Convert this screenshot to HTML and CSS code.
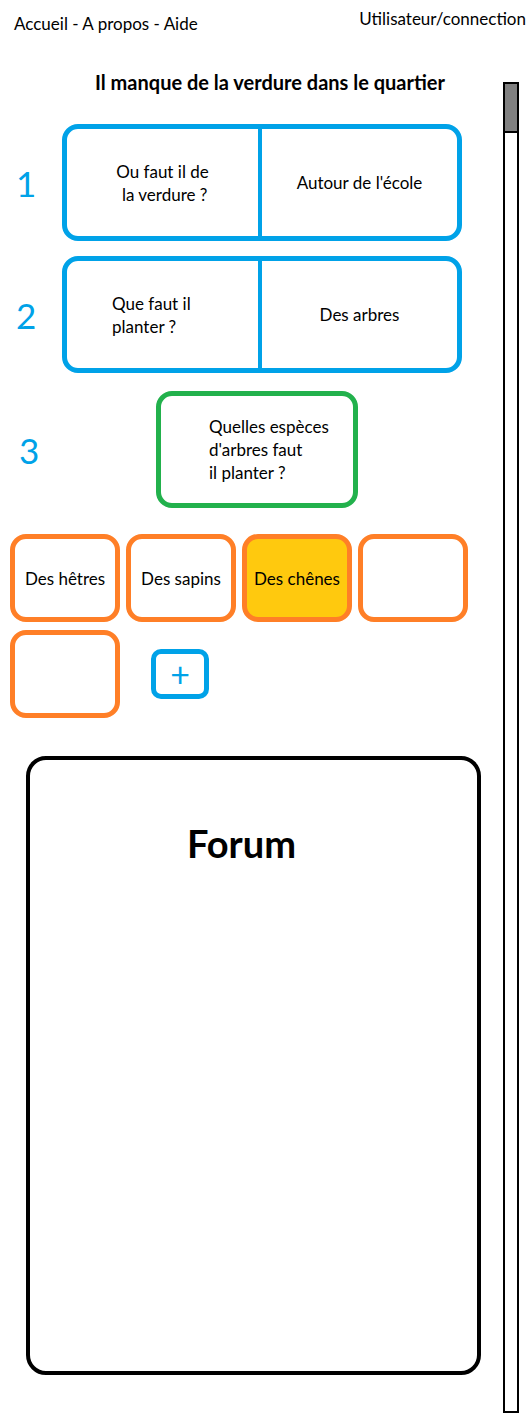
FILE: index.html
```html
<!DOCTYPE html>
<html lang="fr">
<head>
    <meta charset="UTF-8">
    <meta name="viewport" content="width=device-width, initial-scale=1.0">
    <title>Il manque de la verdure dans le quartier</title>
    <link rel="stylesheet" href="styles.css">
</head>
<body>
    <header class="topbar">
        <nav class="nav-links">Accueil - A propos - Aide</nav>
        <a class="user-link">Utilisateur/connection</a>
    </header>

    <div class="page">
        <main class="content">
            <h1 class="title">Il manque de la verdure dans le quartier</h1>

            <div class="step step-1">
                <span class="step-num">1</span>
                <div class="qa">
                    <div class="qa-question center">Ou faut il de<br>&nbsp;la verdure ?</div>
                    <div class="qa-answer">Autour de l'école</div>
                </div>
            </div>

            <div class="step step-2">
                <span class="step-num">2</span>
                <div class="qa">
                    <div class="qa-question">Que faut il<br>planter ?</div>
                    <div class="qa-answer">Des arbres</div>
                </div>
            </div>

            <div class="step step-3">
                <span class="step-num">3</span>
                <div class="question-open">Quelles espèces<br>d'arbres faut<br>il planter ?</div>
            </div>

            <div class="choices">
                <div class="chip">Des hêtres</div>
                <div class="chip">Des sapins</div>
                <div class="chip chip-selected">Des chênes</div>
                <div class="chip"></div>
                <div class="chip"></div>
                <button class="add-btn">+</button>
            </div>

            <section class="forum">
                <h2 class="forum-title">Forum</h2>
            </section>
        </main>

        <div class="scrollbar">
            <div class="scroll-thumb"></div>
        </div>
    </div>
</body>
</html>
```

FILE: styles.css
```css
:root {
    --blue: #00a2e8;
    --green: #22b14c;
    --orange: #ff7f27;
    --yellow: #ffc90e;
    --ink: #000000;
}

* {
    margin: 0;
    padding: 0;
    box-sizing: border-box;
}

body {
    font-family: Lato, "Open Sans", sans-serif;
    font-size: 17px;
    color: var(--ink);
    background: #ffffff;
    width: 528px;
}

.topbar {
    display: flex;
    justify-content: space-between;
    align-items: flex-start;
    height: 60px;
}

.nav-links {
    padding: 13px 0 0 14px;
}

.user-link {
    padding: 8px 2px 0 0;
}

.page {
    display: flex;
}

.content {
    width: 503px;
}

.title {
    font-size: 20px;
    font-weight: 700;
    text-align: center;
    width: 540px;
    padding-top: 10px;
    margin-bottom: 30px;
}

.step {
    display: flex;
    align-items: center;
}

.step-num {
    color: var(--blue);
    font-size: 35px;
    font-weight: 400;
    width: 62px;
    padding-left: 16px;
}

.qa {
    display: grid;
    grid-template-columns: 1fr 1fr;
    width: 400px;
    height: 117px;
    border: 5px solid var(--blue);
    border-radius: 16px;
}

.qa-question,
.qa-answer {
    display: flex;
    align-items: center;
    line-height: 23px;
}

.qa-question {
    border-right: 4px solid var(--blue);
    padding-left: 45px;
}

.qa-question.center {
    justify-content: center;
    text-align: center;
    padding-left: 0;
}

.qa-answer {
    justify-content: center;
}

.step-2 {
    margin-top: 15px;
}

.step-3 {
    margin-top: 18px;
}

.step-3 .step-num {
    width: 156px;
    padding-left: 19px;
}

.question-open {
    width: 202px;
    height: 117px;
    border: 5px solid var(--green);
    border-radius: 16px;
    padding-left: 48px;
    display: flex;
    align-items: center;
    line-height: 23px;
}

.choices {
    display: flex;
    flex-wrap: wrap;
    align-items: center;
    gap: 8px 6px;
    width: 470px;
    padding-left: 10px;
    margin-top: 26px;
}

.chip {
    width: 110px;
    height: 88px;
    border: 5px solid var(--orange);
    border-radius: 16px;
    display: flex;
    align-items: center;
    justify-content: center;
}

.chip-selected {
    background: var(--yellow);
}

.add-btn {
    width: 58px;
    height: 50px;
    margin-left: 25px;
    border: 5px solid var(--blue);
    border-radius: 10px;
    background: #ffffff;
    color: var(--blue);
    font-family: Lato, sans-serif;
    font-size: 34px;
    font-weight: 400;
    line-height: 1;
}

.forum {
    width: 455px;
    height: 619px;
    margin: 38px 0 0 26px;
    border: 4px solid var(--ink);
    border-radius: 20px;
}

.forum-title {
    font-size: 38px;
    font-weight: 700;
    text-align: center;
    padding-right: 24px;
    margin-top: 60px;
}

.scrollbar {
    width: 16px;
    height: 1331px;
    margin-top: 22px;
    border: 2px solid var(--ink);
}

.scroll-thumb {
    height: 49px;
    background: #808080;
    border-bottom: 2px solid var(--ink);
}
```
